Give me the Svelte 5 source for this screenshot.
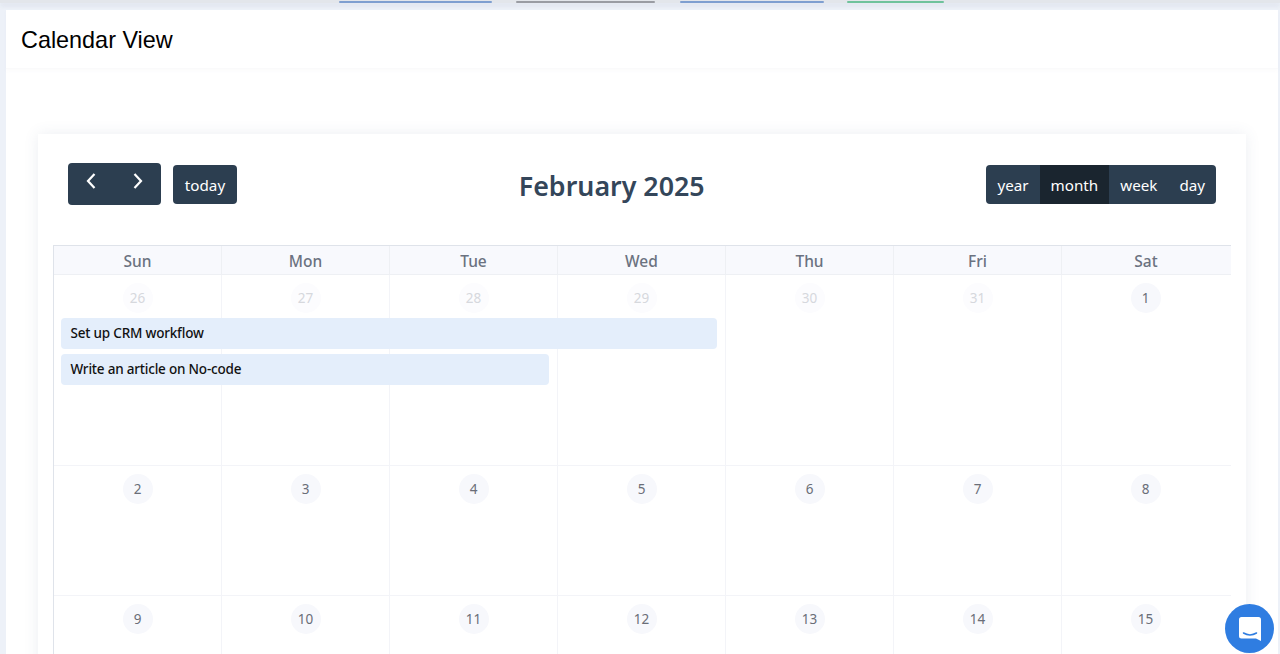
<script lang="ts">
  const days = ['Sun', 'Mon', 'Tue', 'Wed', 'Thu', 'Fri', 'Sat'];
  const views = ['year', 'month', 'week', 'day'];
  const tabs = [
    { w: 153, color: '#7f9fd0' },
    { w: 139, color: '#9a9ca3' },
    { w: 144, color: '#7f9fd0' },
    { w: 97, color: '#6fc29c' }
  ];

  const weeks = [
    {
      tall: true,
      dates: [26, 27, 28, 29, 30, 31, 1].map((n, i) => ({ n, muted: i < 6 })),
      events: [
        { title: 'Set up CRM workflow', span: 4 },
        { title: 'Write an article on No-code', span: 3 }
      ]
    },
    { tall: false, dates: [2, 3, 4, 5, 6, 7, 8].map((n) => ({ n, muted: false })), events: [] },
    { tall: false, dates: [9, 10, 11, 12, 13, 14, 15].map((n) => ({ n, muted: false })), events: [] }
  ];
</script>

<div class="topbar">
  {#each tabs as tab}
    <span class="tab" style="width:{tab.w}px;background:{tab.color}"></span>
  {/each}
</div>

<main class="panel">
  <header class="panel-header">
    <h1>Calendar View</h1>
  </header>

  <section class="card">
    <div class="toolbar">
      <div class="toolbar-left">
        <div class="arrows">
          <button aria-label="Previous">
            <svg width="12" height="18" viewBox="0 0 12 18" fill="none" aria-hidden="true">
              <path d="M9.500 2L3 9l6.500 7" stroke="currentColor" stroke-width="2.200" />
            </svg>
          </button>
          <button aria-label="Next">
            <svg width="12" height="18" viewBox="0 0 12 18" fill="none" aria-hidden="true">
              <path d="M2.500 2L9 9l-6.500 7" stroke="currentColor" stroke-width="2.200" />
            </svg>
          </button>
        </div>
        <button class="today">today</button>
      </div>

      <h2>February 2025</h2>

      <div class="views">
        {#each views as view}
          <button class:active={view === 'month'}>{view}</button>
        {/each}
      </div>
    </div>

    <div class="calendar">
      <div class="head">
        {#each days as day}
          <div class="head-cell">{day}</div>
        {/each}
      </div>

      {#each weeks as week}
        <div class="week" class:tall={week.tall}>
          {#each week.dates as d, i}
            <div class="cell" class:last={i === 6} style="grid-column:{i + 1}"></div>
            <div class="date" class:muted={d.muted} style="grid-column:{i + 1}">
              <span>{d.n}</span>
            </div>
          {/each}
          {#each week.events as ev, i}
            <div class="event" style="grid-column:1 / span {ev.span};grid-row:{i + 2}">{ev.title}</div>
          {/each}
        </div>
      {/each}
    </div>
  </section>
</main>

<button class="chat" aria-label="Open chat">
  <svg width="26" height="26" viewBox="0 0 26 26" aria-hidden="true">
    <path
      d="M4.500 1h17A2.500 2.500 0 0 1 24 3.500V25l-5-2.500H4.500A2.500 2.500 0 0 1 2 20V3.500A2.500 2.500 0 0 1 4.500 1z"
      fill="#fff"
    />
    <path d="M6.500 17c4 2.400 9 2.400 13 0" fill="none" stroke="#2f7de1" stroke-width="1.500" stroke-linecap="round" />
  </svg>
</button>

<style>
  :global(body) {
    margin: 0;
    height: 654px;
    overflow: hidden;
    background: #edf1f8;
    font-family: 'Noto Sans', sans-serif;
  }

  button {
    border: 0;
    padding: 0;
    background: none;
    color: inherit;
    font: inherit;
  }

  /* ---- Top bar ---- */
  .topbar {
    height: 3px;
    display: flex;
    gap: 24px;
    padding-left: 339px;
    background: #e3e6eb;
    box-shadow: 0 3px 4px rgba(120, 135, 160, 0.14);
  }

  .tab {
    display: block;
    height: 2px;
    margin-top: 1px;
    border-radius: 1px;
  }

  .tab:nth-child(3) {
    margin-left: 1px;
  }

  .tab:nth-child(4) {
    margin-left: -1px;
  }

  /* ---- Panel ---- */
  .panel {
    margin: 7px 2px 0 6px;
    background: #fff;
    height: 700px;
  }

  .panel-header {
    height: 59px;
    box-sizing: border-box;
    padding: 2px 0 0 15px;
    display: flex;
    align-items: center;
    border-bottom: 1px solid #fafafb;
    box-shadow: 0 2px 4px rgba(120, 135, 160, 0.03);
  }

  h1 {
    margin: 0;
    font-family: 'Liberation Sans', Arial, sans-serif;
    font-size: 23.400px;
    font-weight: 400;
    color: #000;
  }

  /* ---- Card ---- */
  .card {
    margin: 65px 32px 0;
    padding: 29px 15px 0;
    background: #fff;
    box-shadow: 0 0 14px rgba(70, 90, 130, 0.1);
    height: 600px;
  }

  .toolbar {
    display: flex;
    align-items: center;
    justify-content: space-between;
    padding: 0 15px;
    height: 42px;
    margin-bottom: 40px;
    color: #fff;
  }

  .toolbar-left {
    display: flex;
    align-items: center;
    gap: 12px;
  }

  .arrows {
    width: 93px;
    height: 42px;
    display: flex;
    background: #2c3e50;
    border-radius: 4px;
  }

  .arrows button {
    flex: 1;
    height: 36px;
    display: flex;
    align-items: center;
    justify-content: center;
  }

  .today {
    width: 64px;
    height: 39px;
    padding-top: 2px;
    background: #2c3e50;
    border-radius: 4px;
    font-size: 15.200px;
  }

  h2 {
    margin: 4px 0 0;
    font-size: 26.800px;
    font-weight: 600;
    line-height: 42px;
    color: #34465a;
  }

  .views {
    display: flex;
    height: 39px;
    background: #2c3e50;
    border-radius: 4px;
    overflow: hidden;
    font-size: 15.200px;
  }

  .views button {
    padding: 2px 11px 0;
  }

  .views button.active {
    background: #1a252f;
  }

  /* ---- Calendar ---- */
  .calendar {
    border-left: 1px solid #dfe3ea;
    border-top: 1px solid #dfe3ea;
  }

  .head {
    display: grid;
    grid-template-columns: repeat(7, 168px);
    height: 28px;
    background: #f8f9fd;
    border-bottom: 1px solid #eef0f4;
  }

  .head-cell {
    text-align: center;
    font-size: 15.500px;
    font-weight: 500;
    line-height: 30px;
    color: #6b7280;
    border-right: 1px solid #eef0f4;
  }

  .head-cell:last-child {
    border-right: 0;
  }

  .week {
    display: grid;
    grid-template-columns: repeat(7, 168px);
    grid-template-rows: 43px repeat(2, auto) 1fr;
    height: 130px;
    border-bottom: 1px solid #f3f4f8;
    box-sizing: border-box;
  }

  .week.tall {
    height: 191px;
  }

  .cell {
    grid-row: 1 / -1;
    border-right: 1px solid #f3f4f8;
  }

  .cell.last {
    border-right: 0;
  }

  .date {
    grid-row: 1;
    display: flex;
    justify-content: center;
    padding: 8px 1px 0 0;
  }

  .date span {
    width: 30px;
    height: 30px;
    border-radius: 50%;
    background: #f7f8fc;
    font-size: 13.500px;
    line-height: 30px;
    text-align: center;
    color: #6a6e78;
  }

  .date.muted span {
    background: #fcfcfe;
    color: #d6d8dd;
  }

  .event {
    position: relative;
    margin: 0 9px 5px 7px;
    height: 31px;
    box-sizing: border-box;
    padding-left: 9.500px;
    border-radius: 4px;
    background: #e4eefb;
    font-size: 13.500px;
    font-weight: 500;
    letter-spacing: -0.2px;
    line-height: 31px;
    color: #111;
  }

  /* ---- Chat launcher ---- */
  .chat {
    position: fixed;
    right: 6px;
    top: 604px;
    width: 49px;
    height: 49px;
    border-radius: 50%;
    background: #2f7de1;
    display: flex;
    align-items: center;
    justify-content: center;
  }
</style>
